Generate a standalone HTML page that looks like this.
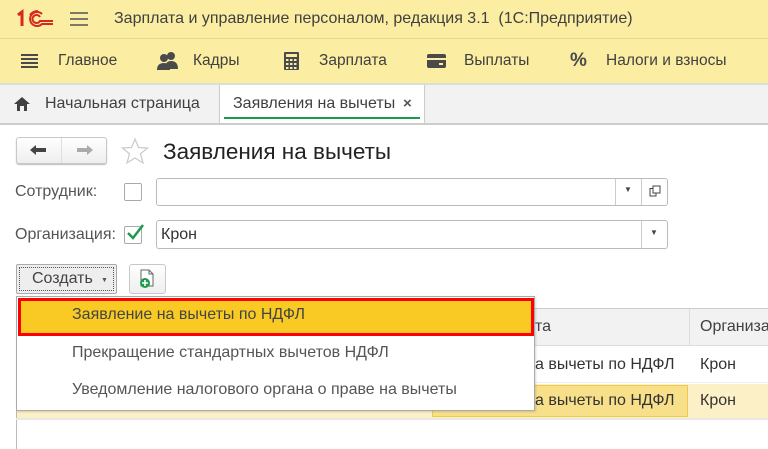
<!DOCTYPE html>
<html><head><meta charset="utf-8"><style>
*{box-sizing:border-box;margin:0;padding:0}
body{width:768px;height:449px;overflow:hidden;background:#fff;font-family:"Liberation Sans",Arial,sans-serif;color:#404040;position:relative;font-size:14px}
.a{position:absolute}
.t{position:absolute;white-space:nowrap}
</style></head><body>
<div class="a" style="left:0;top:0;width:768px;height:38px;background:#fbeda2"></div>
<div class="a" style="left:0;top:38px;width:768px;height:1px;background:#e8d890"></div>
<div class="a" style="left:0;top:39px;width:768px;height:44px;background:#fbeda2"></div>
<div class="a" style="left:0;top:83px;width:768px;height:2px;background:#ddd"></div>
<!-- logo -->
<svg class="a" style="left:16px;top:9px" width="38" height="20" viewBox="0 0 38 20"><path d="M2 6 L6 3 L6 17" stroke="#d52b1e" stroke-width="3" fill="none"/><path d="M26 5 A7 7 0 1 0 26 15 L37 15 M24 8 A4 4 0 1 0 24 12 L37 12 M22 2 A10 10 0 0 0 14 6" stroke="#d52b1e" stroke-width="2" fill="none"/></svg>
<svg class="a" style="left:70px;top:11px" width="18" height="16"><path d="M0 2H18M0 8H18M0 14H18" stroke="#555" stroke-width="1.5"/></svg>
<div class="t" style="left:114px;top:10px;font-size:16px;color:#404040">Зарплата и управление персоналом, редакция 3.1&nbsp; (1С:Предприятие)</div>
<!-- menu -->
<svg class="a" style="left:21px;top:53px" width="17" height="16"><path d="M0 2H17M0 6H17M0 10H17M0 14H17" stroke="#4a4a4a" stroke-width="2"/></svg>
<div class="t" style="left:58px;top:52px;font-size:15.5px">Главное</div>
<svg class="a" style="left:157px;top:51px" width="22" height="19"><circle cx="14" cy="5" r="4" fill="#4a4a4a"/><path d="M8 18 Q8 10 14 10 Q21 10 21 18Z" fill="#4a4a4a"/><circle cx="7" cy="7" r="4" fill="#4a4a4a"/><path d="M0 19 Q0 12 7 12 Q13 12 13 19Z" fill="#4a4a4a"/></svg>
<div class="t" style="left:193px;top:52px;font-size:15.5px">Кадры</div>
<svg class="a" style="left:284px;top:52px" width="15" height="18"><rect width="15" height="18" rx="1" fill="#4a4a4a"/><rect x="2" y="2" width="11" height="3" fill="#fbeda2"/><g fill="#fbeda2"><rect x="2" y="7" width="2.5" height="2"/><rect x="6" y="7" width="2.5" height="2"/><rect x="10" y="7" width="2.5" height="2"/><rect x="2" y="11" width="2.5" height="2"/><rect x="6" y="11" width="2.5" height="2"/><rect x="10" y="11" width="2.5" height="2"/><rect x="2" y="15" width="2.5" height="2"/><rect x="6" y="15" width="2.5" height="2"/><rect x="10" y="15" width="2.5" height="2"/></g></svg>
<div class="t" style="left:319px;top:52px;font-size:15.5px">Зарплата</div>
<svg class="a" style="left:427px;top:54px" width="19" height="14"><rect width="19" height="14" rx="2" fill="#4a4a4a"/><rect x="0" y="4" width="19" height="2" fill="#fbeda2"/><rect x="12" y="9" width="4" height="2" fill="#fbeda2"/></svg>
<div class="t" style="left:464px;top:52px;font-size:15.5px">Выплаты</div>
<div class="t" style="left:570px;top:50px;font-size:19px;font-weight:bold;color:#4a4a4a">%</div>
<div class="t" style="left:606px;top:52px;font-size:15.5px">Налоги и взносы</div>
<!-- tabs -->
<div class="a" style="left:0;top:85px;width:768px;height:38px;background:#f2f2f2"></div>
<div class="a" style="left:0;top:123px;width:768px;height:2px;background:#ccc"></div>
<svg class="a" style="left:14px;top:97px" width="16" height="14"><path d="M8 0 L16 7 H13 V14 H10 V9 H6 V14 H3 V7 H0Z" fill="#404040"/></svg>
<div class="t" style="left:45px;top:95px;font-size:16px">Начальная страница</div>
<div class="a" style="left:219px;top:85px;width:206px;height:38px;background:#fff;border-left:1px solid #ccc;border-right:1px solid #ccc"></div>
<div class="a" style="left:224px;top:117px;width:196px;height:2px;background:#1e9a4b"></div>
<div class="t" style="left:233px;top:95px;font-size:16px">Заявления на вычеты</div>
<div class="t" style="left:403px;top:95px;font-size:15px;font-weight:bold;color:#555">×</div>
<!-- nav -->
<div class="a" style="left:16px;top:137px;width:91px;height:27px;border:1px solid #c8c8c8;border-radius:3px;background:linear-gradient(#fff,#eee);box-shadow:0 1px 1px #bbb"></div>
<div class="a" style="left:61px;top:138px;width:1px;height:25px;background:#ddd"></div>
<svg class="a" style="left:30px;top:144px" width="16" height="12"><path d="M0 6 L6 1 V4 H16 V8 H6 V11Z" fill="#444"/></svg>
<svg class="a" style="left:77px;top:144px" width="16" height="12"><path d="M16 6 L10 1 V4 H0 V8 H10 V11Z" fill="#aaa"/></svg>
<svg class="a" style="left:121px;top:137px" width="28" height="27"><path d="M14 2 L17.5 10.5 L26.5 11 L19.5 16.8 L22 26 L14 21 L6 26 L8.5 16.8 L1.5 11 L10.5 10.5Z" fill="none" stroke="#ccc" stroke-width="1.3"/></svg>
<div class="t" style="left:163px;top:139px;font-size:22.5px;color:#222">Заявления на вычеты</div>
<!-- fields -->
<div class="t" style="left:15px;top:183px;font-size:16px;color:#555">Сотрудник:</div>
<div class="a" style="left:124px;top:183px;width:18px;height:18px;border:1px solid #aaa;border-radius:2px"></div>
<div class="a" style="left:156px;top:178px;width:512px;height:28px;border:1px solid #bbb;border-radius:3px"></div>
<div class="a" style="left:615px;top:179px;width:1px;height:26px;background:#ccc"></div>
<div class="a" style="left:641px;top:179px;width:1px;height:26px;background:#ccc"></div>
<div class="t" style="left:624px;top:185px;font-size:8px;color:#444">▼</div>
<svg class="a" style="left:649px;top:185px" width="12" height="12"><path d="M3.5 3.5 H1 V11 H7 V8.5" fill="none" stroke="#444"/><rect x="4" y="1" width="7" height="7" fill="none" stroke="#444"/></svg>
<div class="t" style="left:15px;top:226px;font-size:16px;color:#555">Организация:</div>
<div class="a" style="left:124px;top:226px;width:18px;height:18px;border:1px solid #aaa;border-radius:2px"></div>
<svg class="a" style="left:125px;top:222px" width="20" height="20"><path d="M3 11 L8 16 L18 3" fill="none" stroke="#1e9a4b" stroke-width="2.5"/></svg>
<div class="a" style="left:156px;top:220px;width:512px;height:29px;border:1px solid #bbb;border-radius:3px"></div>
<div class="a" style="left:641px;top:221px;width:1px;height:27px;background:#ccc"></div>
<div class="t" style="left:650px;top:228px;font-size:8px;color:#444">▼</div>
<div class="t" style="left:161px;top:226px;font-size:16px;color:#333">Крон</div>
<!-- buttons -->
<div class="a" style="left:16px;top:264px;width:101px;height:30px;border:1px solid #aaa;border-radius:2px;background:#eee"></div>
<div class="a" style="left:19px;top:267px;width:95px;height:24px;border:1px dotted #555"></div>
<div class="t" style="left:32px;top:270px;font-size:16px;color:#444">Создать</div>
<div class="t" style="left:101px;top:277px;font-size:7px;color:#555">▼</div>
<div class="a" style="left:129px;top:264px;width:37px;height:30px;border:1px solid #c8c8c8;border-radius:3px;background:linear-gradient(#fff,#eee)"></div>
<svg class="a" style="left:137px;top:268px" width="20" height="22"><path d="M4 2 H12 L16 6 V18 H4Z" fill="#fff" stroke="#666"/><path d="M12 2 V6 H16" fill="none" stroke="#666"/><circle cx="8" cy="15" r="5" fill="#1e9a4b"/><path d="M8 12 V18 M5 15 H11" stroke="#fff" stroke-width="1.6"/></svg>
<!-- table -->
<div class="a" style="left:16px;top:308px;width:752px;height:141px;border-left:1px solid #bbb"></div>
<div class="a" style="left:16px;top:308px;width:752px;height:38px;background:#f2f2f2;border-top:1px solid #ccc;border-bottom:1px solid #ddd"></div>
<div class="a" style="left:689px;top:309px;width:1px;height:37px;background:#ddd"></div>
<div class="t" style="left:535px;top:318px;font-size:16px">та</div>
<div class="t" style="left:700px;top:318px;font-size:16px">Организа</div>
<div class="a" style="left:16px;top:346px;width:752px;height:37px;border-bottom:1px solid #eee"></div>
<div class="t" style="left:535px;top:356px;font-size:16px;color:#333">а вычеты по НДФЛ</div>
<div class="t" style="left:700px;top:356px;font-size:16px;color:#333">Крон</div>
<div class="a" style="left:17px;top:384px;width:751px;height:34px;background:#fcf0c6"></div>
<div class="a" style="left:432px;top:385px;width:256px;height:32px;background:#f8e08a;border:1px solid #f0c94a"></div>
<div class="a" style="left:16px;top:418px;width:752px;height:2px;background:#e8e8e8"></div>
<div class="t" style="left:535px;top:392px;font-size:16px;color:#333">а вычеты по НДФЛ</div>
<div class="t" style="left:700px;top:392px;font-size:16px;color:#333">Крон</div>
<!-- dropdown -->
<div class="a" style="left:16px;top:296px;width:519px;height:115px;background:#fff;border:1px solid #aaa;box-shadow:1px 1px 2px rgba(0,0,0,.15)"></div>
<div class="a" style="left:18px;top:298px;width:516px;height:38px;background:#f9ca24;border:3px solid #f00"></div>
<div class="t" style="left:72px;top:306px;font-size:16px;color:#444">Заявление на вычеты по НДФЛ</div>
<div class="t" style="left:72px;top:344px;font-size:16px;color:#555">Прекращение стандартных вычетов НДФЛ</div>
<div class="t" style="left:72px;top:381px;font-size:16px;color:#555">Уведомление налогового органа о праве на вычеты</div>
</body></html>
